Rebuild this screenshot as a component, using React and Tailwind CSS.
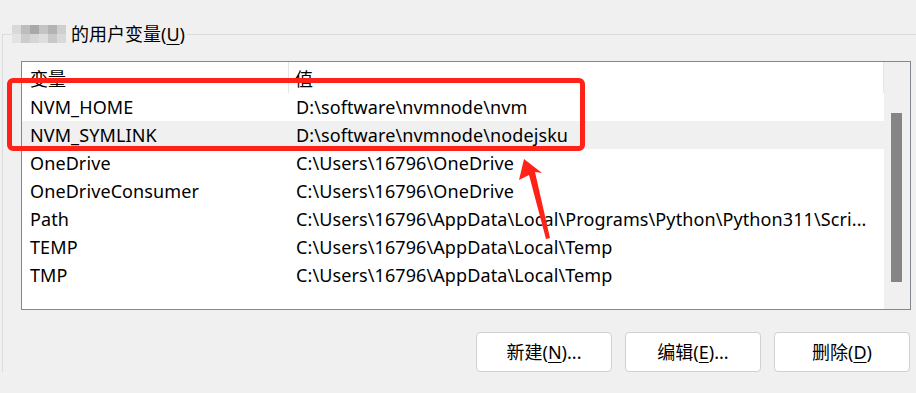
import React from 'react';

const rows = [
  { name: 'NVM_HOME', value: 'D:\\software\\nvmnode\\nvm' },
  { name: 'NVM_SYMLINK', value: 'D:\\software\\nvmnode\\nodejsku', selected: true },
  { name: 'OneDrive', value: 'C:\\Users\\16796\\OneDrive' },
  { name: 'OneDriveConsumer', value: 'C:\\Users\\16796\\OneDrive' },
  { name: 'Path', value: 'C:\\Users\\16796\\AppData\\Local\\Programs\\Python\\Python311\\Scri...' },
  { name: 'TEMP', value: 'C:\\Users\\16796\\AppData\\Local\\Temp' },
  { name: 'TMP', value: 'C:\\Users\\16796\\AppData\\Local\\Temp' },
];

const mosaic = [
  ['#d9d9d9', '#bdbdbd', '#a8a8a8', '#c4c4c4', '#b3b3b3', '#cfcfcf'],
  ['#e3e3e3', '#cccccc', '#d6d6d6', '#dedede', '#c9c9c9', '#d9d9d9'],
];

const Btn = ({ label, hot, suffix }) => (
  <button className="w-[136px] h-[40px] bg-white border border-[#d0d0d0] rounded-[4px] text-[18px] text-black flex items-center justify-center">
    {label}(<span className="underline underline-offset-[3px]">{hot}</span>){suffix}
  </button>
);

const App = () => {
  return (
    <div className="relative w-[916px] h-[393px] overflow-hidden bg-[#f0f0f0] font-['Noto_Sans','Noto_Sans_CJK_SC',sans-serif] text-black">
      <div className="ml-[2px] mt-[34px] border-t border-l border-[#dcdcdc] pr-[5px]">
        <div className="-mt-[12px] ml-[9px] w-fit flex items-center bg-[#f0f0f0] pr-[2px] h-[22px] text-[18px] leading-[22px]">
          <span className="flex flex-col mr-[5px]">
            {mosaic.map((r, i) => (
              <span key={i} className="flex">
                {r.map((c, j) => (
                  <span key={j} className="w-[9px] h-[9px]" style={{ background: c }} />
                ))}
              </span>
            ))}
          </span>
          的用户变量(<span className="underline underline-offset-[3px]">U</span>)
        </div>

        <div className="ml-[18px] mt-[16px] h-[249px] border border-[#828790] bg-white flex">
          <div className="flex-1 flex flex-col">
            <div className="h-[31px] flex text-[18px] tracking-[0.1px]">
              <div className="w-[267px] pl-[8px] pt-[4px] border-r border-[#e5e5e5] h-[31px]">变量</div>
              <div className="flex-1 pl-[6px] pt-[4px] border-r border-[#e5e5e5] h-[31px]">值</div>
            </div>
            {rows.map((r) => (
              <div
                key={r.name}
                className={`h-[28px] flex items-center text-[18px] tracking-[0.1px] whitespace-nowrap ${r.selected ? 'bg-[#f0f0f0]' : ''}`}
              >
                <div className="w-[267px] pl-[8px]">{r.name}</div>
                <div className="pl-[7px]">{r.value}</div>
              </div>
            ))}
          </div>
          <div className="w-[26px] bg-[#f0f0f0] pt-[51px] pl-[7px]">
            <div className="w-[11px] h-[169px] bg-[#858585]" />
          </div>
        </div>

        <div className="mt-[22px] flex justify-end gap-[13px] pr-[1px]">
          <Btn label="新建" hot="N" suffix="..." />
          <Btn label="编辑" hot="E" suffix="..." />
          <Btn label="删除" hot="D" suffix="" />
        </div>
      </div>

      {/* red annotation box */}
      <div className="absolute left-[7px] top-[78px] w-[578px] h-[73px] border-[5px] border-[#ff2219] rounded-[6px] pointer-events-none" />

      {/* red arrow */}
      <svg className="absolute left-0 top-0 pointer-events-none" width="916" height="393" viewBox="0 0 916 393">
        <polygon
          points="524,159 542,173 535,172 550,238 546,239 529,175 519,180"
          fill="#ff2219"
        />
      </svg>
    </div>
  );
};

export default App;
